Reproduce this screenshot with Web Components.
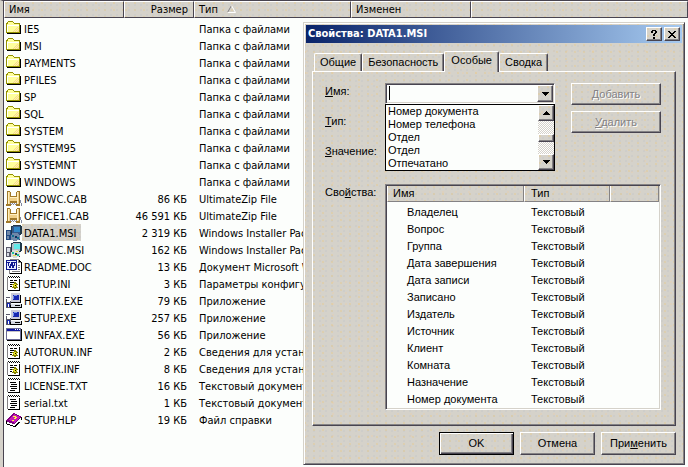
<!DOCTYPE html>
<html lang="ru">
<head>
<meta charset="utf-8">
<title>Свойства: DATA1.MSI</title>
<style>
	html, body {
		height: 100%;
		margin: 0;
		overflow: hidden;
	}

	body {
		--face: #d5d2ca;
		--dark: #484450;
		--grain: radial-gradient(circle at 1px 1px, #ecc87c55 1px, transparent 1px) 0 0 / 9px 7px,
			radial-gradient(circle at 4px 3px, #bcc0c844 1px, transparent 1px) 0 0 / 6px 5px,
			radial-gradient(circle at 3px 6px, #f4cc9c44 1px, transparent 1px) 0 0 / 13px 11px;
		background: #fcfefc;
		color: #000;
		font: 11px/13px "Liberation Sans", Arial, sans-serif;
	}

	properties-dialog {
		position: absolute;
		top: 22px;
		left: 303px;
		right: 3px;
	}
</style>
</head>
<body>
<file-list></file-list>
<properties-dialog caption="Свойства: DATA1.MSI">
	<tab-strip slot="tabs">
		<tab-item>Общие</tab-item>
		<tab-item>Безопасность</tab-item>
		<tab-item active>Особые</tab-item>
		<tab-item>Сводка</tab-item>
	</tab-strip>
	<property-form></property-form>
	<push-button slot="buttons" default>OK</push-button>
	<push-button slot="buttons">Отмена</push-button>
	<push-button slot="buttons">При<u>м</u>енить</push-button>
</properties-dialog>

<script>
const computer = (screen, shade) => `
	<path fill="#5a5a6a" d="M0 5h5v10H0z"/>
	<path fill="#d8dce4" d="M1 6h3v4H1zM1 11h2v3H1z"/>
	<path fill="#203848" d="M5 1h2V0h8v1h1v8h-1v1H6V9H5z"/>
	<path fill="${shade}" d="M6 2h1V1h7v8H6z"/>
	<path fill="${screen}" d="M8 2h6v5H8z"/>`;

const notepad = `
	<path fill="#000" d="M13 3h1v12h-1zM2 14h12v1H2z"/>
	<path fill="#848284" d="M1 1h12v13H1z"/>
	<path fill="#fff" d="M2 2h11v12H2z"/>
	<path fill="#000" d="M2 0h1v1H2zM4 0h1v1H4zM6 0h1v1H6zM8 0h1v1H8zM10 0h1v1h-1zM12 0h1v1h-1zM3 1h1v1H3zM5 1h1v1H5zM7 1h1v1H7zM9 1h1v1H9zM11 1h1v1h-1zM13 1h1v1h-1z"/>
	<path fill="#fff" d="M2 1h1v1H2zM4 1h1v1H4zM6 1h1v1H6zM8 1h1v1H8zM10 1h1v1h-1zM12 1h1v1h-1z"/>`;

const gear = `
	<path fill="#000" d="M4 4h3v1H4zM8 4h3v1H8zM4 6h5v1H4zM4 8h3v1H4zM4 10h2v1H4z"/>
	<path fill="#848200" d="M8 6h2v1h1v1h1v1h-1v2h1v1h-2v1H8v-1H6v-1h1V9H6V8h2z"/>
	<path fill="#f0e820" d="M8 8h2v1h1v1h-1v1H8v-1H7V9h1z"/>
	<path fill="#000" d="M9 9h1v1H9z"/>`;

const setup = `
	<path fill="#000" d="M5 1h9v1h1v8H5zM3 11h13v4H3z"/>
	<path fill="#c8c8d8" d="M5 0h9v9H5z"/>
	<path fill="#1828b0" d="M7 2h6v5H7z"/>
	<path fill="#7090f0" d="M8 2h3v1H8zM7 3h1v3H7z"/>
	<path fill="#d8dce4" d="M5 11h10v3H5z"/>
	<path fill="#000" d="M9 12h5v1H9z"/>
	<path fill="#585868" d="M0 4h4v1H0zM0 6h4v9H0zM4 8h1v4H4z"/>
	<path fill="#fff" d="M1 5h3v4H1z"/>
	<path fill="#1828b0" d="M1 10h3v4H1z"/>
	<path fill="#fff" d="M2 11h1v3H2z"/>`;

const glyphs = {
	folder: `
		<path fill="#000" d="M14 4h1v9H1v-1h13z"/>
		<path fill="#949200" d="M1 1h1V0h5v1h1v1h6v10H0V2h1z"/>
		<path fill="#ffff9c" d="M2 1h5v1h1v1h5v8H1V3h1z"/>
		<path fill="#fff" d="M1 4h12v1H2v6H1z"/>
		<path fill="#f8d494" d="M11 6h1v1h-1zM10 7h1v1h-1zM12 7h1v1h-1zM9 8h1v1H9zM11 8h1v1h-1zM8 9h1v1H8zM10 9h1v1h-1zM12 9h1v1h-1zM7 10h1v1H7zM9 10h1v1H9zM11 10h2v1h-2z"/>`,
	cab: `
		<path fill="#a07828" d="M1 0h3v1h1v4h5V1h1V0h3v15h-4v-3H5v3H0v-2h1z"/>
		<path fill="#f0d088" d="M2 1h2v12H2zM11 1h2v12h-2zM4 6h7v4H4z"/>
		<path fill="#fff0c0" d="M2 1h1v12H2zM11 1h1v12h-1zM4 6h7v1H4z"/>
		<path fill="#8088a0" d="M4 12h1v1H4zM6 12h1v1H6zM8 12h1v1H8zM10 12h1v1h-1zM5 13h1v1H5zM7 13h1v1H7zM9 13h1v1H9zM14 9h1v3h-1zM15 12h1v3h-1z"/>`,
	msi: computer('#60e8e8', '#b0c0c8') + `
		<path fill="#30383c" d="M5 9h9v6H5z"/>
		<path fill="#d8dcdc" d="M6 8h6v1h1v1h1v4h-1v1h-2v1H7v-1H5v-5h1z"/>
		<path fill="#20c0a0" d="M6 10h2v2H6zM11 12h2v2h-2z"/>
		<path fill="#e0e040" d="M7 13h3v1H7zM10 9h2v1h-2z"/>
		<path fill="#204050" d="M9 11h2v2H9z"/>`,
	msiSelected: computer('#3088c8', '#34588c') + `
		<path fill="#204880" d="M0 5h5v10H0zM5 9h9v6H5z"/>
		<path fill="#7088a8" d="M1 6h3v4H1zM1 11h2v3H1zM6 8h6v1h1v1h1v4h-1v1h-2v1H7v-1H5v-5h1z"/>
		<path fill="#107090" d="M6 10h2v2H6zM11 12h2v2h-2z"/>
		<path fill="#103060" d="M9 11h2v2H9z"/>`,
	word: `
		<path fill="#000" d="M4 1h10v1h1v1h1v12H4z"/>
		<path fill="#fff" d="M4 1h8v3h3v10H4z"/>
		<path fill="#848284" d="M4 0h9v1H4zM12 1h1v2h2v1h-3zM12 6h2v1h-2zM12 8h2v1h-2zM12 10h2v1h-2zM6 12h8v1H6zM3 11h1v4H3z"/>
		<path fill="#101890" d="M0 1h11v10H0z"/>
		<path fill="#e8ecff" d="M1 2h9v8H1z"/>
		<path fill="#101890" d="M1 3h3v1H3v3h1V5h1V3h2v3h1V4H7V3h3v1H9v3H8v2H6V7H5v2H3V7H2V4H1z"/>`,
	ini: notepad + gear,
	inf: notepad + gear,
	txt: notepad + `
		<path fill="#000" d="M4 4h6v1H4zM5 6h6v1H5zM4 8h7v1H4zM5 10h6v1H5zM4 12h5v1H4z"/>`,
	setup,
	window: `
		<path fill="#000" d="M15 2h1v12H1v-1h14z"/>
		<path fill="#6a6a94" d="M0 1h15v12H0z"/>
		<path fill="#fff" d="M1 2h13v10H1z"/>
		<path fill="#1018a0" d="M1 2h13v2H1z"/>
		<path fill="#fff" d="M9 2h1v1H9zM11 2h1v1h-1zM13 2h1v1h-1z"/>
		<path fill="#c6c3c6" d="M1 4h13v1H1z"/>`,
	help: `
		<path fill="#000" d="M1 10h1v2h5v2h2v-1h1v-1h1v-1h1v-1h2V8h2V5h-1v2l-1 3-5 5H8L0 12V9h1z"/>
		<path fill="#800080" d="M0 8h1V7h1V6h1V5h1V4h1V3h1V2h1V1h2v1h2v1h2v1h2v2h-1v1h-1v1h-1v1h-1v1h-1v1h-1v1h-1v1H8v-1H6v-1H3v-1H1V9H0z"/>
		<path fill="#c81cb8" d="M3 7h1V6h1V5h1V4h1V3h1V2h1v1h2v1h2v1h1v1h-1v1h-1v1h-1v1h-1v1H9v1H8v-1H6V9H4V8H3z"/>
		<path fill="#fff" d="M1 10h2v1h3v1h2v1h1v-1h1v1H9v1H7v-1H4v-1H1z"/>
		<path fill="#ffff40" d="M7 4h3v1h1v1h-1v1H8V6h1V5H7zM6 8h2v1H6z"/>`,
};

class FileIcon extends HTMLElement {
	connectedCallback() {
		const root = this.attachShadow({ mode: 'open' });
		root.innerHTML = `
			<style>
				:host { display: block; flex: none; width: 16px; height: 16px; }
				svg { display: block; }
			</style>
			<svg width="16" height="16" viewBox="0 0 16 16" shape-rendering="crispEdges" aria-hidden="true">${glyphs[this.getAttribute('type')]}</svg>
		`;
	}
}
customElements.define('file-icon', FileIcon);

const files = [
	['folder', 'IE5', '', 'Папка с файлами'],
	['folder', 'MSI', '', 'Папка с файлами'],
	['folder', 'PAYMENTS', '', 'Папка с файлами'],
	['folder', 'PFILES', '', 'Папка с файлами'],
	['folder', 'SP', '', 'Папка с файлами'],
	['folder', 'SQL', '', 'Папка с файлами'],
	['folder', 'SYSTEM', '', 'Папка с файлами'],
	['folder', 'SYSTEM95', '', 'Папка с файлами'],
	['folder', 'SYSTEMNT', '', 'Папка с файлами'],
	['folder', 'WINDOWS', '', 'Папка с файлами'],
	['cab', 'MSOWC.CAB', '86 КБ', 'UltimateZip File'],
	['cab', 'OFFICE1.CAB', '46 591 КБ', 'UltimateZip File'],
	['msiSelected', 'DATA1.MSI', '2 319 КБ', 'Windows Installer Package'],
	['msi', 'MSOWC.MSI', '162 КБ', 'Windows Installer Package'],
	['word', 'README.DOC', '13 КБ', 'Документ Microsoft Word'],
	['ini', 'SETUP.INI', '3 КБ', 'Параметры конфигурации'],
	['setup', 'HOTFIX.EXE', '79 КБ', 'Приложение'],
	['setup', 'SETUP.EXE', '257 КБ', 'Приложение'],
	['window', 'WINFAX.EXE', '56 КБ', 'Приложение'],
	['inf', 'AUTORUN.INF', '2 КБ', 'Сведения для установки'],
	['inf', 'HOTFIX.INF', '8 КБ', 'Сведения для установки'],
	['txt', 'LICENSE.TXT', '16 КБ', 'Текстовый документ'],
	['txt', 'serial.txt', '1 КБ', 'Текстовый документ'],
	['help', 'SETUP.HLP', '19 КБ', 'Файл справки'],
];

class FileList extends HTMLElement {
	connectedCallback() {
		const root = this.attachShadow({ mode: 'open' });
		root.innerHTML = `
			<style>
				:host {
					display: block;
					height: 100%;
					box-sizing: border-box;
					border-left: 3px solid var(--face);
					border-top: 1px solid var(--dark);
					box-shadow: inset 1px 0 var(--dark);
					padding-left: 1px;
					font-family: "DejaVu Sans Condensed", Tahoma, sans-serif;
				}
				table { width: 100%; table-layout: fixed; border-spacing: 0; }
				.name, .date { width: 120px; }
				.size { width: 70px; }
				.type { width: 157px; }
				th {
					box-sizing: border-box;
					height: 17px;
					padding: 0 4px;
					background: var(--grain), var(--face);
					border: 1px solid #fff;
					border-right-color: var(--dark);
					border-bottom-color: var(--dark);
					font-weight: normal;
					line-height: 15px;
					text-align: left;
				}
				th.size, td:nth-child(2) { text-align: right; }
				th.size { padding-right: 5px; }
				th svg { margin-left: 6px; }
				tbody::before { content: ""; display: block; height: 2px; }
				td { padding: 3px 5px 0; overflow: hidden; line-height: 14px; white-space: nowrap; }
				td:nth-child(2) { padding: 3px 7px 0 0; }
				td:first-child { padding: 0 0 0 2px; }
				.file { display: flex; align-items: flex-end; }
				.file span { padding: 3px 5px 0 2px; }
				.selected span { background: var(--grain), var(--face); }
			</style>
			<table>
				<thead>
					<tr>
						<th class="name">Имя</th>
						<th class="size">Размер</th>
						<th class="type">Тип <svg width="9" height="8" viewBox="0 0 9 8"><path d="M.5 7.500L4.500 .5" fill="none" stroke="#848284"/><path d="M4.500 .5l4 7h-8" fill="none" stroke="#fff"/></svg></th>
						<th class="date">Изменен</th>
						<th></th>
					</tr>
				</thead>
				<tbody>
					${files.map(([icon, name, size, type]) => `
						<tr>
							<td><div class="file ${icon === 'msiSelected' ? 'selected' : ''}"><file-icon type="${icon}"></file-icon><span>${name}</span></div></td>
							<td>${size}</td>
							<td>${type}</td>
							<td></td>
							<td></td>
						</tr>`).join('')}
				</tbody>
			</table>
		`;
	}
}
customElements.define('file-list', FileList);

const raised = `
	border: 1px solid #fff;
	border-right-color: var(--dark);
	border-bottom-color: var(--dark);
	box-shadow: inset -1px -1px #848284;
	background: var(--grain), var(--face);
`;

class PushButton extends HTMLElement {
	connectedCallback() {
		const root = this.attachShadow({ mode: 'open' });
		const disabled = this.hasAttribute('disabled') ? 'disabled' : '';
		root.innerHTML = `
			<style>
				:host { display: block; width: 75px; height: 23px; }
				:host([disabled]) { width: auto; height: 22px; }
				button {
					box-sizing: border-box;
					width: 100%;
					height: 100%;
					padding: 0;
					color: #000;
					font: inherit;
					${raised}
				}
				:host([default]) button {
					border-color: #000;
					box-shadow: inset 1px 1px #fff, inset -1px -1px var(--dark), inset -2px -2px #848284;
				}
				button:disabled { color: #848284; text-shadow: 1px 1px #fff; }
			</style>
			<button type="button" ${disabled}><slot></slot></button>
		`;
	}
}
customElements.define('push-button', PushButton);

class TabStrip extends HTMLElement {
	connectedCallback() {
		const root = this.attachShadow({ mode: 'open' });
		root.innerHTML = `
			<style>
				:host { display: flex; align-items: flex-end; height: 21px; margin-bottom: -1px; padding-left: 2px; position: relative; }
			</style>
			<slot></slot>
		`;
	}
}
customElements.define('tab-strip', TabStrip);

class TabItem extends HTMLElement {
	connectedCallback() {
		const root = this.attachShadow({ mode: 'open' });
		root.innerHTML = `
			<style>
				:host { display: block; height: 18px; margin-bottom: 1px; }
				:host([active]) { height: 21px; margin-bottom: 0; }
				button {
					height: 100%;
					padding: 0 5px;
					color: #000;
					font: inherit;
					background: var(--grain), var(--face);
					border: 1px solid #fff;
					border-right-color: var(--dark);
					border-bottom: 0;
					border-radius: 2px 2px 0 0;
					box-shadow: inset -1px 0 #848284;
				}
				:host([active]) button { padding: 0 6px 3px; }
			</style>
			<button type="button" role="tab" aria-selected="${this.hasAttribute('active')}"><slot></slot></button>
		`;
	}
}
customElements.define('tab-item', TabItem);

const properties = ['Владелец', 'Вопрос', 'Группа', 'Дата завершения', 'Дата записи', 'Записано',
	'Издатель', 'Источник', 'Клиент', 'Комната', 'Назначение', 'Номер документа'];

class PropertyTable extends HTMLElement {
	connectedCallback() {
		const root = this.attachShadow({ mode: 'open' });
		root.innerHTML = `
			<style>
				:host {
					display: block;
					background: #fcfefc;
					border: 1px solid #848284;
					border-right-color: #fff;
					border-bottom-color: #fff;
					box-shadow: inset 1px 1px var(--dark), inset -1px -1px var(--face);
					padding: 1px;
				}
				table { width: 100%; table-layout: fixed; border-spacing: 0; }
				th {
					box-sizing: border-box;
					height: 16px;
					padding: 0 5px;
					background: var(--grain), var(--face);
					border: 1px solid #fff;
					border-right-color: #848284;
					border-bottom-color: #848284;
					border-top: 0;
					font-weight: normal;
					text-align: left;
				}
				th:first-child { width: 137px; }
				th:nth-child(2) { width: 86px; padding-left: 6px; }
				tbody::before { content: ""; display: block; height: 2px; }
				td { height: 17px; padding: 0 0 0 7px; line-height: 17px; white-space: nowrap; }
				td:first-child { padding-left: 20px; }
			</style>
			<table>
				<thead><tr><th>Имя</th><th>Тип</th><th></th></tr></thead>
				<tbody>${properties.map(name => `<tr><td>${name}</td><td>Текстовый</td></tr>`).join('')}</tbody>
			</table>
		`;
	}
}
customElements.define('property-table', PropertyTable);

const arrow = (up) => `<svg width="7" height="4" viewBox="0 0 7 4" shape-rendering="crispEdges"><path d="${up ? 'M3 0h1v1h1v1h1v1h1v1H0V3h1V2h1V1h1z' : 'M0 0h7v1H6v1H5v1H4v1H3V3H2V2H1V1H0z'}"/></svg>`;

class PropertyForm extends HTMLElement {
	connectedCallback() {
		const root = this.attachShadow({ mode: 'open' });
		root.innerHTML = `
			<style>
				:host {
					display: grid;
					grid-template-columns: 60px 1fr 106px;
					row-gap: 13px;
					padding: 11px 14px 15px 12px;
				}
				.labels { display: flex; flex-direction: column; gap: 14px; line-height: 16px; }
				.actions { display: flex; flex-direction: column; gap: 6px; margin-left: 16px; }
				.combo {
					display: flex;
					height: 21px;
					box-sizing: border-box;
					padding: 1px;
					background: #fcfefc;
					border: 1px solid #848284;
					border-right-color: #fff;
					border-bottom-color: #fff;
					box-shadow: inset 1px 1px var(--dark), inset -1px -1px var(--face);
				}
				input {
					flex: 1;
					min-width: 0;
					padding: 0 3px;
					border: 0;
					outline: 0;
					font: inherit;
					background: linear-gradient(#000, #000) 2px 1px / 1px 14px no-repeat;
				}
				button {
					display: flex;
					align-items: center;
					justify-content: center;
					flex: none;
					box-sizing: border-box;
					width: 16px;
					height: 16px;
					padding: 0;
					${raised}
				}
				.combo button { height: 17px; }
				.list { display: flex; height: 67px; box-sizing: border-box; border: 1px solid #000; background: #fcfefc; }
				select {
					flex: 1;
					min-width: 0;
					height: 65px;
					padding: 0;
					border: 0;
					border-radius: 0;
					outline: 0;
					overflow: hidden;
					background: none;
					color: #000;
					font: inherit;
				}
				option { height: 13px; min-height: 13px; padding: 0 2px; line-height: 13px; }
				.scroll {
					display: flex;
					flex-direction: column;
					background: repeating-conic-gradient(#fff 0 25%, var(--face) 0 50%) 0 0 / 2px 2px;
				}
				.thumb { box-sizing: border-box; height: 8px; margin: 13px 0 auto; ${raised} }
				property-table { grid-column: 2 / 4; }
			</style>
			<div class="labels">
				<label for="name"><u>И</u>мя:</label>
				<span><u>Т</u>ип:</span>
				<span><u>З</u>начение:</span>
			</div>
			<div>
				<div class="combo">
					<input id="name" type="text" autocomplete="off">
					<button type="button" aria-label="Открыть список">${arrow(false)}</button>
				</div>
				<div class="list">
					<select size="5" aria-label="Имя">
						<option>Номер документа</option>
						<option>Номер телефона</option>
						<option>Отдел</option>
						<option>Отдел</option>
						<option>Отпечатано</option>
					</select>
					<div class="scroll">
						<button type="button" aria-label="Вверх">${arrow(true)}</button>
						<div class="thumb"></div>
						<button type="button" aria-label="Вниз">${arrow(false)}</button>
					</div>
				</div>
			</div>
			<div class="actions">
				<push-button disabled><u>Д</u>обавить</push-button>
				<push-button disabled><u>У</u>далить</push-button>
			</div>
			<div class="labels"><span>Сво<u>й</u>ства:</span></div>
			<property-table></property-table>
		`;
	}
}
customElements.define('property-form', PropertyForm);

class PropertiesDialog extends HTMLElement {
	connectedCallback() {
		const root = this.attachShadow({ mode: 'open' });
		root.innerHTML = `
			<style>
				:host {
					display: block;
					box-sizing: border-box;
					border: 1px solid var(--face);
					border-right-color: var(--dark);
					border-bottom-color: var(--dark);
					box-shadow: inset 1px 1px #fff, inset -1px -1px #848284;
					padding: 2px;
					background: var(--grain), var(--face);
				}
				header {
					display: flex;
					align-items: center;
					gap: 2px;
					height: 18px;
					padding: 0 2px;
					background: linear-gradient(90deg, #0a246a, #a6caf0);
					color: #fff;
				}
				h1 { flex: 1; margin: 0; font: bold 11px/16px "DejaVu Sans Condensed", Tahoma, sans-serif; }
				header button {
					display: grid;
					place-items: center;
					width: 16px;
					height: 14px;
					padding: 0;
					box-sizing: border-box;
					${raised}
				}
				main { padding: 8px 6px 6px; }
				.panel {
					border: 1px solid #fff;
					border-right-color: var(--dark);
					border-bottom-color: var(--dark);
					box-shadow: inset -1px -1px #848284;
				}
				footer { display: flex; justify-content: flex-end; gap: 6px; padding: 0 6px 7px; }
			</style>
			<header>
				<h1>${this.getAttribute('caption')}</h1>
				<button type="button" aria-label="Справка"><svg width="6" height="9" viewBox="0 0 6 9" shape-rendering="crispEdges"><path d="M1 0h4v1h1v2H5v1H4v2H2V4h1V3h1V1H2v2H0V1h1zM2 7h2v2H2z"/></svg></button>
				<button type="button" aria-label="Закрыть"><svg width="8" height="7" viewBox="0 0 8 7" shape-rendering="crispEdges"><path d="M0 0h2v1h1v1h2V1h1V0h2v1H7v1H6v1H5v1h1v1h1v1h1v1H6V6H5V5H3v1H2v1H0V6h1V5h1V4h1V3H2V2H1V1H0z"/></svg></button>
			</header>
			<main>
				<slot name="tabs"></slot>
				<div class="panel"><slot></slot></div>
			</main>
			<footer><slot name="buttons"></slot></footer>
		`;
	}
}
customElements.define('properties-dialog', PropertiesDialog);
</script>
</body>
</html>
